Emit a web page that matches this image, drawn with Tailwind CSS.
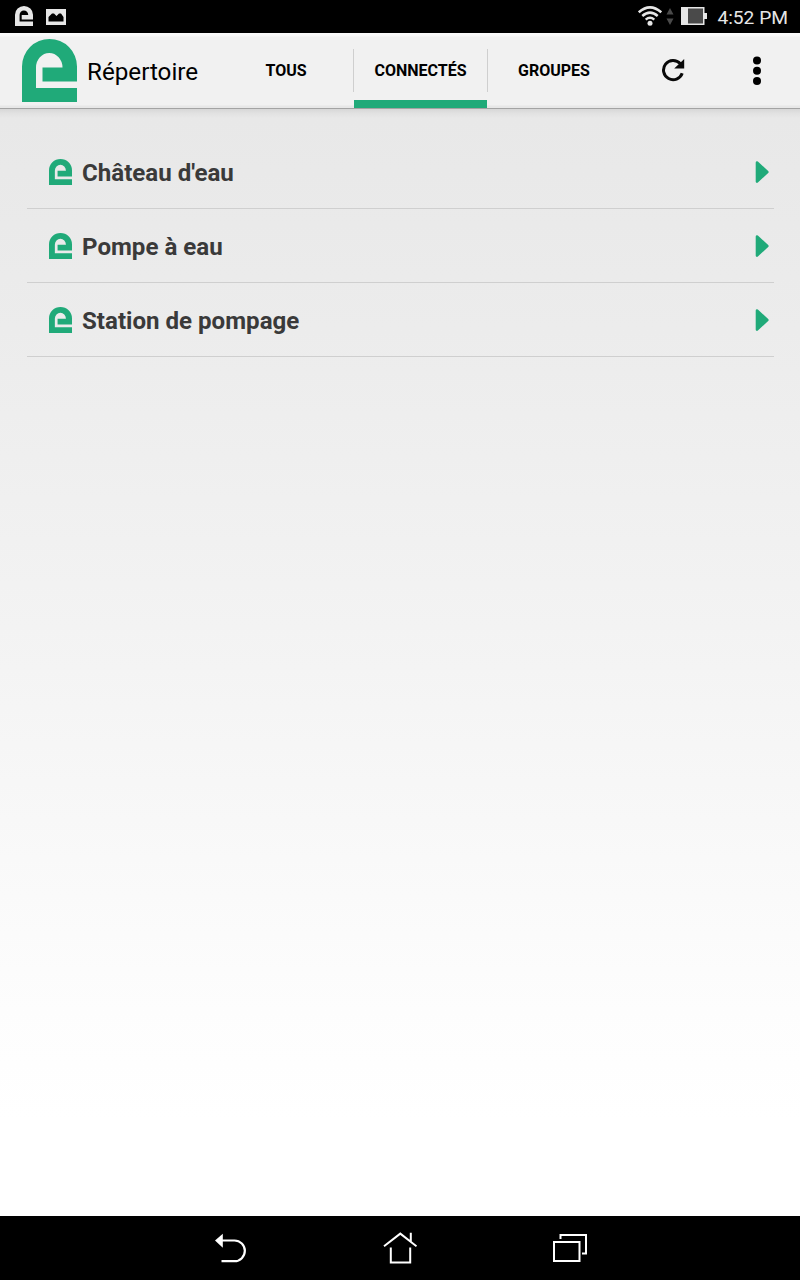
<!DOCTYPE html>
<html lang="fr">
<head>
  <meta charset="utf-8">
  <meta name="viewport" content="width=device-width, initial-scale=1">
  <title>Répertoire</title>
  <script src="https://cdn.jsdelivr.net/npm/@tailwindcss/browser@4"></script>
</head>
<body class="font-['Roboto',sans-serif] bg-black">

<!-- shared icons -->
<svg class="hidden">
  <symbol id="logo" viewBox="0 0 55 63" preserveAspectRatio="none">
    <path d="M0 63V27.5A27.5 27.5 0 0 1 55 27.5V42.5H20.5V28.5H40.5A13.25 14.5 0 0 0 14 28.5V49H55V63Z" fill="currentColor"/>
  </symbol>
  <symbol id="arrow" viewBox="0 0 14 24">
    <path d="M2 2.5L12.3 12L2 21.5Z" fill="currentColor" stroke="currentColor" stroke-width="2.6" stroke-linejoin="round"/>
  </symbol>
</svg>

<div class="flex flex-col w-[800px] h-[1280px] overflow-hidden">

  <!-- status bar -->
  <div class="flex items-center h-[33px] shrink-0 bg-black pl-[15px] pr-3 text-[#e6e6e6]">
    <svg class="w-[18px] h-5 -mt-px"><use href="#logo"/></svg>
    <svg class="w-5 h-4 ml-[13px] mt-px" viewBox="0 0 20 16">
      <path fill="currentColor" fill-rule="evenodd" d="M0 0H20V16H0ZM2.5 12.5H17.5V8L15 4.5H13L10.5 7L8 4.5H6L2.5 8Z"/>
    </svg>
    <svg class="w-6 h-5 ml-auto -mt-px" viewBox="0 0 24 20" fill="none" stroke="currentColor" stroke-width="2.5">
      <path d="M.8 6.3Q12-3.5 23.2 6.3M4.3 10Q12 3.2 19.7 10M7.7 13.6Q12 10 16.3 13.6"/>
      <circle cx="12" cy="17.3" r="2.5" fill="currentColor" stroke="none"/>
    </svg>
    <svg class="w-2 h-[17px] ml-1 text-[#4a4a4a]" viewBox="0 0 8 17" fill="currentColor">
      <path d="M4 0L7.5 6.5H.5ZM4 17L7.5 10.5H.5Z"/>
    </svg>
    <svg class="w-[26px] h-[18px] ml-[7px] -mt-px" viewBox="0 0 26 18">
      <path fill="currentColor" d="M0 0H23.5V6H26V12H23.5V18H0Z"/>
      <path fill="#4a4a4a" d="M7 1.5H22V16.5H7Z"/>
    </svg>
    <div class="ml-2.5 text-[19.2px] leading-[33px] pt-px whitespace-nowrap">4:52 PM</div>
  </div>

  <!-- action bar -->
  <div class="flex h-[76px] shrink-0 border-b border-[#a3a3a3] bg-[linear-gradient(#fbfbfb_0px,#f8f8f8_3px,#f1f1f1_4px,#f1f1f1_72px,#e7e7e7_73px,#e7e7e7_75px)]">
    <div class="flex w-[219px] pl-[22px] pt-1.5">
      <svg class="w-[55px] h-[63px] text-[#20aa79]"><use href="#logo"/></svg>
      <div class="ml-2.5 text-[24.2px] leading-[66px] text-black whitespace-nowrap">Répertoire</div>
    </div>
    <div class="w-[134px] text-center text-base leading-[75px] font-bold text-black">TOUS</div>
    <div class="flex flex-col w-[135px]">
      <div class="h-[43px] mt-4 border-x border-[#cfcfcf] text-center text-base leading-[43px] font-bold text-black">CONNECTÉS</div>
      <div class="h-2 mx-px mt-2 bg-[#20aa79]"></div>
    </div>
    <div class="w-[132px] text-center text-base leading-[75px] font-bold text-black">GROUPES</div>
    <svg class="w-6 h-6 ml-[41px] mt-[25px]" viewBox="0 0 24 24">
      <path d="M19.2 5.6A9.6 9.6 0 1 0 21.2 15.2" fill="none" stroke="#0a0a0a" stroke-width="3"/>
      <path d="M23.2 1V10.6H13.2Z" fill="#0a0a0a"/>
    </svg>
    <svg class="w-2 h-[30px] ml-[68px] mt-[23px]" viewBox="0 0 8 30">
      <circle cx="4" cy="4.4" r="4"/>
      <circle cx="4" cy="14.7" r="4"/>
      <circle cx="4" cy="25" r="4"/>
    </svg>
  </div>

  <!-- list -->
  <div class="grow bg-[linear-gradient(#d7d7d7_0px,#e1e1e1_4px,#e8e8e8_9px,#ececec_220px,#f4f4f4_560px,#fdfdfd_900px,#fff_1010px)] pt-[26px] pl-[27px] pr-[26px]">
    <div class="flex items-center h-[74px] border-b border-[#cfcfcf] pl-[22px] pr-[5px]">
      <svg class="w-[23px] h-[26px] text-[#20aa79]"><use href="#logo"/></svg>
      <div class="ml-2.5 text-[24.1px] leading-8 font-bold text-[#3a3a3a] pt-[2px]">Château d'eau</div>
      <svg class="w-3.5 h-6 ml-auto text-[#20aa79]"><use href="#arrow"/></svg>
    </div>
    <div class="flex items-center h-[74px] border-b border-[#cfcfcf] pl-[22px] pr-[5px]">
      <svg class="w-[23px] h-[26px] text-[#20aa79]"><use href="#logo"/></svg>
      <div class="ml-2.5 text-[24.1px] leading-8 font-bold text-[#3a3a3a] pt-[2px]">Pompe à eau</div>
      <svg class="w-3.5 h-6 ml-auto text-[#20aa79]"><use href="#arrow"/></svg>
    </div>
    <div class="flex items-center h-[74px] border-b border-[#cfcfcf] pl-[22px] pr-[5px]">
      <svg class="w-[23px] h-[26px] text-[#20aa79]"><use href="#logo"/></svg>
      <div class="ml-2.5 text-[24.1px] leading-8 font-bold text-[#3a3a3a] pt-[2px]">Station de pompage</div>
      <svg class="w-3.5 h-6 ml-auto text-[#20aa79]"><use href="#arrow"/></svg>
    </div>
  </div>

  <!-- navigation bar -->
  <div class="flex justify-center gap-[136px] h-16 shrink-0 bg-black pt-4">
    <svg class="w-[34px] h-8" viewBox="0 0 34 32" fill="none" stroke="#fff" stroke-width="2.2">
      <path d="M7 8.5H21.5A10.3 10.3 0 0 1 21.5 29.2H8.5"/>
      <path d="M2 8.5L9.8 1.8V15.8Z" fill="#fff" stroke="none"/>
    </svg>
    <svg class="w-[34px] h-8" viewBox="0 0 34 32" fill="none" stroke="#fff" stroke-width="2">
      <path d="M1 14.3L17.3 1.6L33.5 14.3M27.8 .8V9.5M7.8 15.5V30.5H27.2V15.5"/>
    </svg>
    <svg class="w-[34px] h-8" viewBox="0 0 34 32" fill="none" stroke="#fff" stroke-width="2">
      <path d="M1 10H26.5V29H1ZM7.5 7V3H33V21.5H29"/>
    </svg>
  </div>
</div>
</body>
</html>
